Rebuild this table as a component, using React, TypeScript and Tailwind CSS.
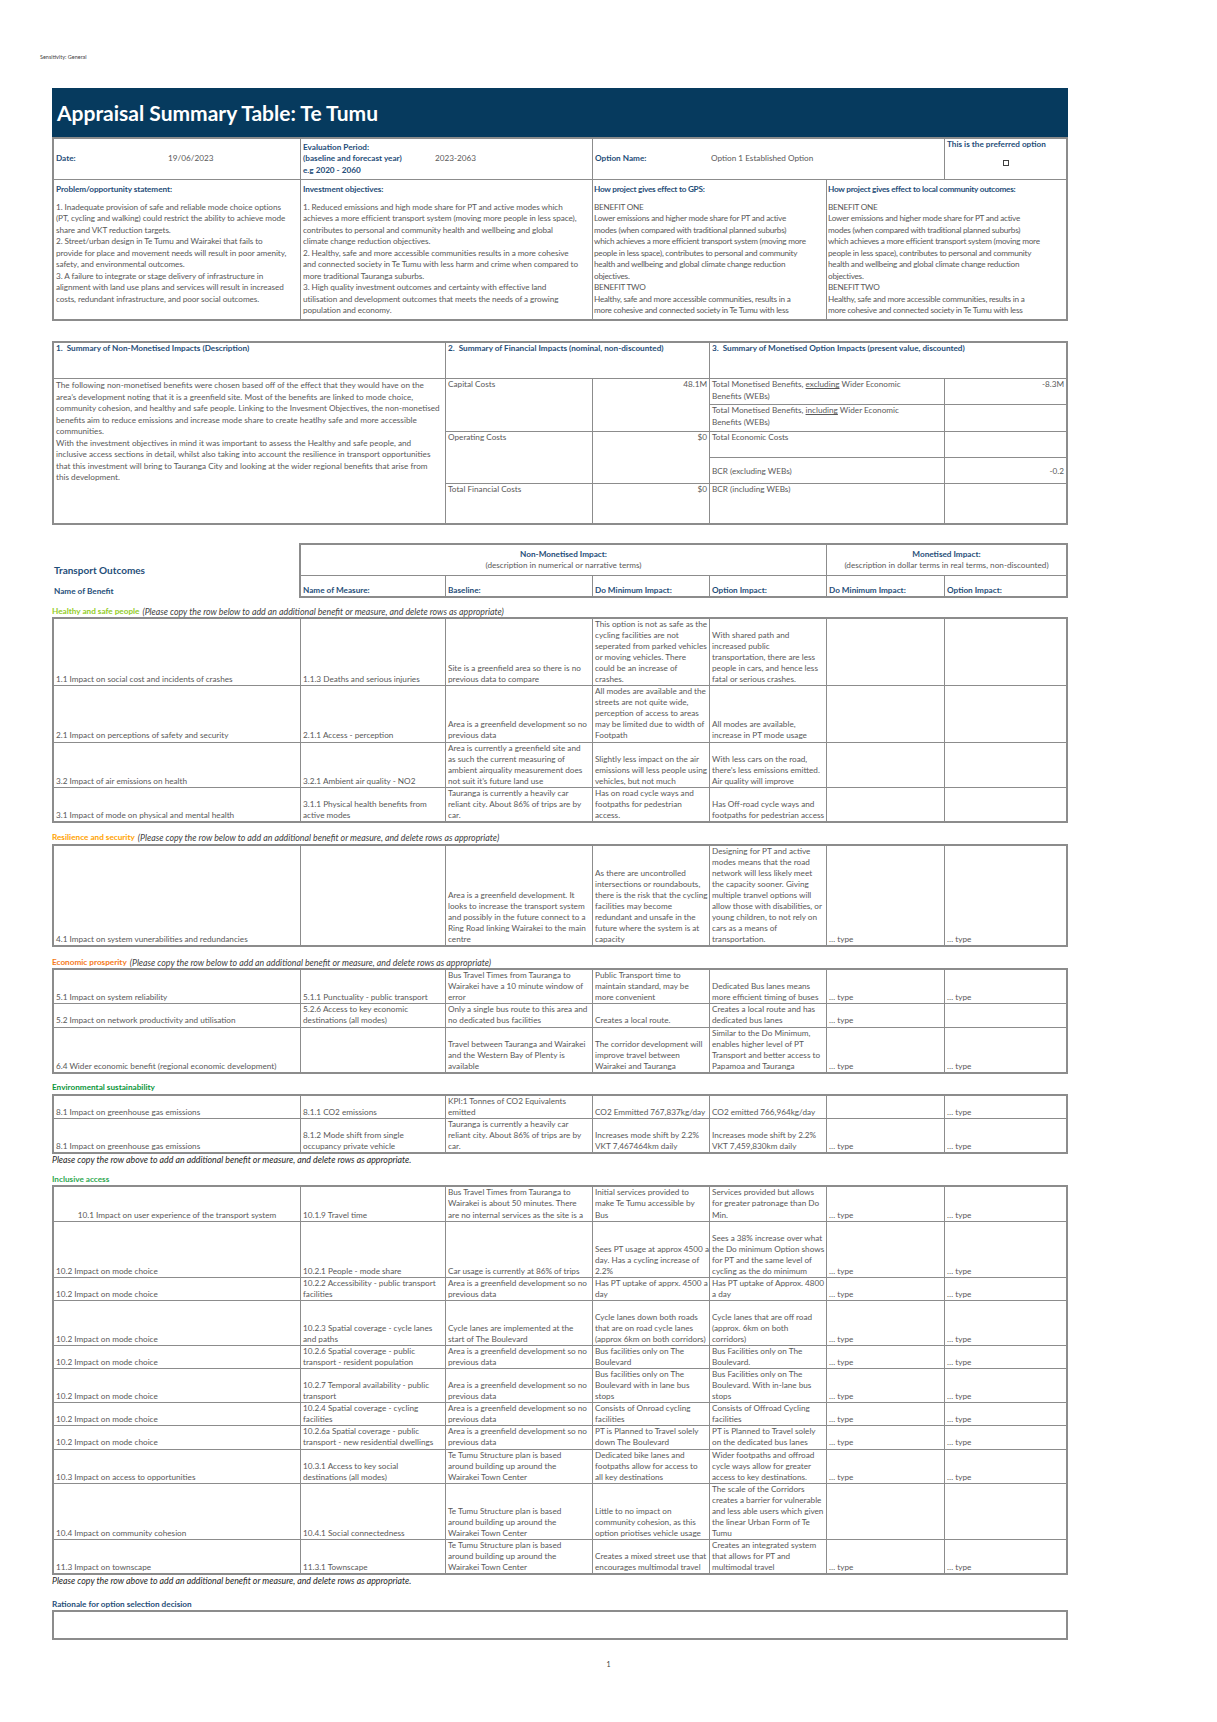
import React from "react";

// Appraisal Summary Table — a single printed page rendered as nested grids.
// Cells follow the spreadsheet convention: text sits at the bottom of each cell.

const COLS = "grid-cols-[246px_144px_146px_116px_116px_117px_121px]";
const BLUE = "text-[#1f4e79] font-bold";

type Row = { c: string[]; center?: boolean };

const healthy: Row[] = [
  {
    c: [
      "1.1 Impact on social cost and incidents of crashes",
      "1.1.3 Deaths and serious injuries",
      "Site is a greenfield area so there is no\nprevious data to compare",
      "This option is not as safe as the\ncycling facilities are not\nseperated from parked vehicles\nor moving vehicles. There\ncould be an increase of\ncrashes.",
      "With shared path and\nincreased public\ntransportation, there are less\npeople in cars, and hence less\nfatal or serious crashes.",
      "",
      "",
    ],
  },
  {
    c: [
      "2.1 Impact on perceptions of safety and security",
      "2.1.1 Access - perception",
      "Area is a greenfield development so no\nprevious data",
      "All modes are available and the\nstreets are not quite wide,\nperception of access to areas\nmay be limited due to width of\nFootpath",
      "All modes are available,\nincrease in PT mode usage",
      "",
      "",
    ],
  },
  {
    c: [
      "3.2 Impact of air emissions on health",
      "3.2.1 Ambient air quality - NO2",
      "Area is currently a greenfield site and\nas such the current measuring of\nambient airquality measurement does\nnot suit it\u2019s future land use",
      "Slightly less impact on the air\nemissions will less people using\nvehicles, but not much",
      "With less cars on the road,\nthere\u2019s less emissions emitted.\nAir quality will improve",
      "",
      "",
    ],
  },
  {
    c: [
      "3.1 Impact of mode on physical and mental health",
      "3.1.1 Physical health benefits from\nactive modes",
      "Tauranga is currently a heavily car\nreliant city. About 86% of trips are by\ncar.",
      "Has on road cycle ways and\nfootpaths for pedestrian\naccess.",
      "Has Off-road cycle ways and\nfootpaths for pedestrian access",
      "",
      "",
    ],
  },
];

const resilience: Row[] = [
  {
    c: [
      "4.1 Impact on system vunerabilities and redundancies",
      "",
      "Area is a greenfield development. It\nlooks to increase the transport system\nand possibly in the future connect to a\nRing Road linking Wairakei to the main\ncentre",
      "As there are uncontrolled\nintersections or roundabouts,\nthere is the risk that the cycling\nfacilities may become\nredundant and unsafe in the\nfuture where the system is at\ncapacity",
      "Designing for PT and active\nmodes means that the road\nnetwork will less likely meet\nthe capacity sooner. Giving\nmultiple tranvel options will\nallow those with disabilities, or\nyoung children, to not rely on\ncars as a means of\ntransportation.",
      "\u2026 type",
      "\u2026 type",
    ],
  },
];

const economic: Row[] = [
  {
    c: [
      "5.1 Impact on system reliability",
      "5.1.1 Punctuality - public transport",
      "Bus Travel Times from Tauranga to\nWairakei have a 10 minute window of\nerror",
      "Public Transport time to\nmaintain standard, may be\nmore convenient",
      "Dedicated Bus lanes means\nmore efficient timing of buses",
      "\u2026 type",
      "\u2026 type",
    ],
  },
  {
    c: [
      "5.2 Impact on network productivity and utilisation",
      "5.2.6 Access to key economic\ndestinations (all modes)",
      "Only a single bus route to this area and\nno dedicated bus facilities",
      "Creates a local route.",
      "Creates a local route and has\ndedicated bus lanes",
      "\u2026 type",
      "",
    ],
  },
  {
    c: [
      "6.4 Wider economic benefit (regional economic development)",
      "",
      "Travel between Tauranga and Wairakei\nand the Western Bay of Plenty is\navailable",
      "The corridor development will\nimprove travel between\nWairakei and Tauranga",
      "Similar to the Do Minimum,\nenables higher level of PT\nTransport and better access to\nPapamoa and Tauranga",
      "\u2026 type",
      "\u2026 type",
    ],
  },
];

const environmental: Row[] = [
  {
    c: [
      "8.1 Impact on greenhouse gas emissions",
      "8.1.1 CO2 emissions",
      "KPI:1 Tonnes of CO2 Equivalents\nemitted",
      "CO2 Emmitted 767,837kg/day",
      "CO2 emitted 766,964kg/day",
      "",
      "\u2026 type",
    ],
  },
  {
    c: [
      "8.1 Impact on greenhouse gas emissions",
      "8.1.2 Mode shift from single\noccupancy private vehicle",
      "Tauranga is currently a heavily car\nreliant city. About 86% of trips are by\ncar.",
      "Increases mode shift by 2.2%\nVKT 7,467464km daily",
      "Increases mode shift by 2.2%\nVKT 7,459,830km daily",
      "\u2026 type",
      "\u2026 type",
    ],
  },
];

const GREENFIELD = "Area is a greenfield development so no\nprevious data";
const STRUCTURE = "Te Tumu Structure plan is based\naround building up around the\nWairakei Town Center";

const inclusive: Row[] = [
  {
    center: true,
    c: [
      "10.1 Impact on user experience of the transport system",
      "10.1.9 Travel time",
      "Bus Travel Times from Tauranga to\nWairakei is about 50 minutes. There\nare no internal services as the site is a",
      "Initial services provided to\nmake Te Tumu accessible by\nBus",
      "Services provided but allows\nfor greater patronage than Do\nMin.",
      "\u2026 type",
      "\u2026 type",
    ],
  },
  {
    c: [
      "10.2 Impact on mode choice",
      "10.2.1 People - mode share",
      "Car usage is currently at 86% of trips",
      "Sees PT usage at approx 4500 a\nday. Has a cycling increase of\n2.2%",
      "\nSees a 38% increase over what\nthe Do minimum Option shows\nfor PT and the same level of\ncycling as the do minimum",
      "\u2026 type",
      "\u2026 type",
    ],
  },
  {
    c: [
      "10.2 Impact on mode choice",
      "10.2.2 Accessibility - public transport\nfacilities",
      GREENFIELD,
      "Has PT uptake of apprx. 4500 a\nday",
      "Has PT uptake of Approx. 4800\na day",
      "\u2026 type",
      "\u2026 type",
    ],
  },
  {
    c: [
      "10.2 Impact on mode choice",
      "10.2.3 Spatial coverage - cycle lanes\nand paths",
      "Cycle lanes are implemented at the\nstart of The Boulevard",
      "\nCycle lanes down both roads\nthat are on road cycle lanes\n(approx 6km on both corridors)",
      "Cycle lanes that are off road\n(approx. 6km on both\ncorridors)",
      "\u2026 type",
      "\u2026 type",
    ],
  },
  {
    c: [
      "10.2 Impact on mode choice",
      "10.2.6 Spatial coverage - public\ntransport - resident population",
      GREENFIELD,
      "Bus facilities only on The\nBoulevard",
      "Bus Facilities only on The\nBoulevard.",
      "\u2026 type",
      "\u2026 type",
    ],
  },
  {
    c: [
      "10.2 Impact on mode choice",
      "10.2.7 Temporal availability - public\ntransport",
      GREENFIELD,
      "Bus facilities only on The\nBoulevard with in lane bus\nstops",
      "Bus Facilities only on The\nBoulevard. With in-lane bus\nstops",
      "\u2026 type",
      "\u2026 type",
    ],
  },
  {
    c: [
      "10.2 Impact on mode choice",
      "10.2.4 Spatial coverage - cycling\nfacilities",
      GREENFIELD,
      "Consists of Onroad cycling\nfacilities",
      "Consists of Offroad Cycling\nfacilities",
      "\u2026 type",
      "\u2026 type",
    ],
  },
  {
    c: [
      "10.2 Impact on mode choice",
      "10.2.6a Spatial coverage - public\ntransport - new residential dwellings",
      GREENFIELD,
      "PT is Planned to Travel solely\ndown The Boulevard",
      "PT is Planned to Travel solely\non the dedicated bus lanes",
      "\u2026 type",
      "\u2026 type",
    ],
  },
  {
    c: [
      "10.3 Impact on access to opportunities",
      "10.3.1 Access to key social\ndestinations (all modes)",
      STRUCTURE,
      "Dedicated bike lanes and\nfootpaths allow for access to\nall key destinations",
      "Wider footpaths and offroad\ncycle ways allow for greater\naccess to key destinations.",
      "\u2026 type",
      "\u2026 type",
    ],
  },
  {
    c: [
      "10.4 Impact on community cohesion",
      "10.4.1 Social connectedness",
      STRUCTURE,
      "Little to no impact on\ncommunity cohesion, as this\noption priotises vehicle usage",
      "The scale of the Corridors\ncreates a barrier for vulnerable\nand less able users which given\nthe linear Urban Form of Te\nTumu",
      "",
      "",
    ],
  },
  {
    c: [
      "11.3 Impact on townscape",
      "11.3.1 Townscape",
      STRUCTURE,
      "Creates a mixed street use that\nencourages multimodal travel",
      "Creates an integrated system\nthat allows for PT and\nmultimodal travel",
      "\u2026 type",
      "\u2026 type",
    ],
  },
];

const PROBLEM =
  "1. Inadequate provision of safe and reliable mode choice options\n(PT, cycling and walking) could restrict the ability to achieve mode\nshare and VKT reduction targets.\n2. Street/urban design in Te Tumu and Wairakei that fails to\nprovide for place and movement needs will result in poor amenity,\nsafety, and environmental outcomes.\n3. A failure to integrate or stage delivery of infrastructure in\nalignment with land use plans and services will result in increased\ncosts, redundant infrastructure, and poor social outcomes.";

const OBJECTIVES =
  "1. Reduced emissions and high mode share for PT and active modes which\nachieves a more efficient transport system (moving more people in less space),\ncontributes to personal and community health and wellbeing and global\nclimate change reduction objectives.\n2. Healthy, safe and more accessible communities results in a more cohesive\nand connected society in Te Tumu with less harm and crime when compared to\nmore traditional Tauranga suburbs.\n3. High quality investment outcomes and certainty with effective land\nutilisation and development outcomes that meets the needs of a growing\npopulation and economy.";

const BENEFITS =
  "BENEFIT ONE\nLower emissions and higher mode share for PT and active\nmodes (when compared with traditional planned suburbs)\nwhich achieves a more efficient transport system (moving more\npeople in less space), contributes to personal and community\nhealth and wellbeing and global climate change reduction\nobjectives.\nBENEFIT TWO\nHealthy, safe and more accessible communities, results in a\nmore cohesive and connected society in Te Tumu with less\nharm and crime when compared to more traditional";

const NON_MONETISED =
  "The following non-monetised benefits were chosen based off of the effect that they would have on the\narea\u2019s development noting that it is a greenfield site. Most of the benefits are linked to mode choice,\ncommunity cohesion, and healthy and safe people. Linking to the Invesment Objectives, the non-monetised\nbenefits aim to reduce emissions and increase mode share to create heatlhy safe and more accessible\ncommunities.\nWith the investment objectives in mind it was important to assess the Healthy and safe people, and\ninclusive access sections in detail, whilst also taking into account the resilience in transport opportunities\nthat this investment will bring to Tauranga City and looking at the wider regional benefits that arise from\nthis development.";

function OutcomeTable({ rows }: { rows: Row[] }) {
  return (
    <div className={`grid ${COLS} w-[1016px] gap-px border-2 border-[#8c8c8c] bg-[#8c8c8c] leading-[11.05px]`}>
      {rows.flatMap((r, i) =>
        r.c.map((t, j) => (
          <div
            key={`${i}-${j}`}
            className={`flex flex-col justify-end overflow-hidden whitespace-pre bg-white px-[2px] ${
              j === 0 && r.center ? "text-center" : ""
            }`}
          >
            {t}
          </div>
        )),
      )}
    </div>
  );
}

function Category({ name, color, note, h }: { name: string; color: string; note: boolean; h: string }) {
  return (
    <div className={`flex items-end ${h}`}>
      <span className={`font-bold ${color}`}>{name}</span>
      {note && (
        <span className="ml-[3px] text-[8.8px] italic text-[#404040]">
          (Please copy the row below to add an additional benefit or measure, and delete rows as appropriate)
        </span>
      )}
    </div>
  );
}

function CopyAbove() {
  return (
    <div className="text-[8.8px] italic text-[#262626]">
      Please copy the row above to add an additional benefit or measure, and delete rows as appropriate.
    </div>
  );
}

function TopTable() {
  return (
    <div className="flex flex-col gap-px border-2 border-[#8c8c8c] bg-[#8c8c8c] leading-[11.5px]">
      <div className="grid h-[40px] grid-cols-[246px_291px_351px_121px] gap-px">
        <div className="flex items-center bg-white px-[2px]">
          <span className={`w-[112px] ${BLUE}`}>Date:</span>
          <span>19/06/2023</span>
        </div>
        <div className="flex items-center bg-white px-[2px]">
          <span className={`w-[132px] whitespace-pre ${BLUE}`}>
            {"Evaluation Period:\n(baseline and forecast year)\ne.g 2020 - 2060"}
          </span>
          <span>2023-2063</span>
        </div>
        <div className="flex items-center bg-white px-[2px]">
          <span className={`w-[116px] ${BLUE}`}>Option Name:</span>
          <span>Option 1 Established Option</span>
        </div>
        <div className="flex flex-col bg-white px-[2px]">
          <span className={BLUE}>This is the preferred option</span>
          <div className="mt-[9px] h-[6px] w-[6px] self-center border border-[#404040]" />
        </div>
      </div>
      <div className="grid h-[139px] grid-cols-[246px_291px_233px_239px] gap-px">
        {[
          ["Problem/opportunity statement:", PROBLEM, "px-[2px] tracking-[-0.08px]"],
          ["Investment objectives:", OBJECTIVES, "px-[2px] tracking-[-0.08px]"],
          ["How project gives effect to GPS:", BENEFITS, "px-[1px] tracking-[-0.24px]"],
          ["How project gives effect to local community outcomes:", BENEFITS, "px-[1px] tracking-[-0.24px]"],
        ].map(([head, body, pad]) => (
          <div key={head} className={`overflow-hidden bg-white pt-[4px] ${pad}`}>
            <div className={BLUE}>{head}</div>
            <div className="mt-[6px] whitespace-pre">{body}</div>
          </div>
        ))}
      </div>
    </div>
  );
}

function SummaryTable() {
  const cell = "overflow-hidden bg-white px-[2px]";
  return (
    <div className="mt-[20px] flex flex-col gap-px border-2 border-[#8c8c8c] bg-[#8c8c8c] leading-[11.5px]">
      <div className="grid h-[35px] grid-cols-[391px_263px_356px] gap-px">
        <div className={`${cell} ${BLUE}`}>1.&nbsp; Summary of Non-Monetised Impacts (Description)</div>
        <div className={`${cell} ${BLUE}`}>2.&nbsp; Summary of Financial Impacts (nominal, non-discounted)</div>
        <div className={`${cell} ${BLUE}`}>3.&nbsp; Summary of Monetised Option Impacts (present value, discounted)</div>
      </div>
      <div className="grid grid-cols-[391px_146px_116px_234px_121px] grid-rows-[25px_26px_25px_25px_39px] gap-px">
        <div className={`${cell} col-start-1 row-span-5 row-start-1 whitespace-pre pt-[1px]`}>{NON_MONETISED}</div>
        <div className={`${cell} col-start-2 row-span-2 row-start-1`}>Capital Costs</div>
        <div className={`${cell} col-start-3 row-span-2 row-start-1 text-right`}>48.1M</div>
        <div className={`${cell} col-start-4 row-start-1`}>
          Total Monetised Benefits, <span className="underline">excluding</span> Wider Economic
          <br />
          Benefits (WEBs)
        </div>
        <div className={`${cell} col-start-5 row-start-1 text-right`}>-8.3M</div>
        <div className={`${cell} col-start-4 row-start-2`}>
          Total Monetised Benefits, <span className="underline">including</span> Wider Economic
          <br />
          Benefits (WEBs)
        </div>
        <div className={`${cell} col-start-5 row-start-2`} />
        <div className={`${cell} col-start-2 row-span-2 row-start-3`}>Operating Costs</div>
        <div className={`${cell} col-start-3 row-span-2 row-start-3 text-right`}>$0</div>
        <div className={`${cell} col-start-4 row-start-3`}>Total Economic Costs</div>
        <div className={`${cell} col-start-5 row-start-3`} />
        <div className={`${cell} col-start-4 row-start-4 pt-[8px]`}>BCR (excluding WEBs)</div>
        <div className={`${cell} col-start-5 row-start-4 pt-[8px] text-right`}>-0.2</div>
        <div className={`${cell} col-start-2 row-start-5`}>Total Financial Costs</div>
        <div className={`${cell} col-start-3 row-start-5 text-right`}>$0</div>
        <div className={`${cell} col-start-4 row-start-5`}>BCR (including WEBs)</div>
        <div className={`${cell} col-start-5 row-start-5`} />
      </div>
    </div>
  );
}

function OutcomesHeader() {
  const cell = "bg-white px-[2px]";
  return (
    <div className="mt-[18px] flex">
      <div className="flex w-[247px] flex-col justify-end pb-[1px] pl-[2px]">
        <div className={`text-[10px] leading-[14px] ${BLUE}`}>Transport Outcomes</div>
        <div className={`mt-[9px] leading-[11.5px] ${BLUE}`}>Name of Benefit</div>
      </div>
      <div className="flex w-[769px] flex-col gap-px border-2 border-[#8c8c8c] bg-[#8c8c8c] leading-[11.5px]">
        <div className="grid h-[30px] grid-cols-[525px_239px] gap-px">
          <div className={`${cell} flex flex-col items-center justify-center`}>
            <span className={BLUE}>Non-Monetised Impact:</span>
            <span>(description in numerical or narrative terms)</span>
          </div>
          <div className={`${cell} flex flex-col items-center justify-center`}>
            <span className={BLUE}>Monetised Impact:</span>
            <span>(description in dollar terms in real terms, non-discounted)</span>
          </div>
        </div>
        <div className="grid h-[20px] grid-cols-[144px_146px_116px_116px_117px_121px] gap-px">
          {["Name of Measure:", "Baseline:", "Do Minimum Impact:", "Option Impact:", "Do Minimum Impact:", "Option Impact:"].map(
            (t, i) => (
              <div key={i} className={`${cell} flex items-end ${BLUE}`}>
                {t}
              </div>
            ),
          )}
        </div>
      </div>
    </div>
  );
}

export default function App() {
  return (
    <div className="h-[1722px] w-[1217px] bg-white font-['Lato','Liberation_Sans',sans-serif] text-[8.2px] leading-[11.5px] text-[#595959]">
      <div className="h-[88px] pl-[40px] pt-[54px] text-[5.5px] leading-[6px] text-[#404040]">Sensitivity: General</div>
      <div className="ml-[52px] w-[1016px]">
        <div className="flex h-[49px] items-center bg-[#063a5e] pl-[5px] text-[21px] font-bold leading-none text-white">
          Appraisal Summary Table: Te Tumu
        </div>
        <TopTable />
        <SummaryTable />
        <OutcomesHeader />

        <Category name="Healthy and safe people" color="text-[#92cc1f]" note h="h-[19px]" />
        <OutcomeTable rows={healthy} />

        <Category name="Resilience and security" color="text-[#ffa200]" note h="h-[21px]" />
        <OutcomeTable rows={resilience} />

        <Category name="Economic prosperity" color="text-[#f47920]" note h="h-[21px]" />
        <OutcomeTable rows={economic} />

        <Category name="Environmental sustainability" color="text-[#0a963a]" note={false} h="h-[20px]" />
        <OutcomeTable rows={environmental} />
        <CopyAbove />

        <Category name="Inclusive access" color="text-[#2ea84f]" note={false} h="h-[20px]" />
        <OutcomeTable rows={inclusive} />
        <CopyAbove />

        <div className={`mt-[12px] ${BLUE}`}>Rationale for option selection decision</div>
        <div className="h-[30px] border-2 border-[#8c8c8c]" />
      </div>
      <div className="mt-[19px] text-center text-[7px] text-[#404040]">1</div>
    </div>
  );
}
